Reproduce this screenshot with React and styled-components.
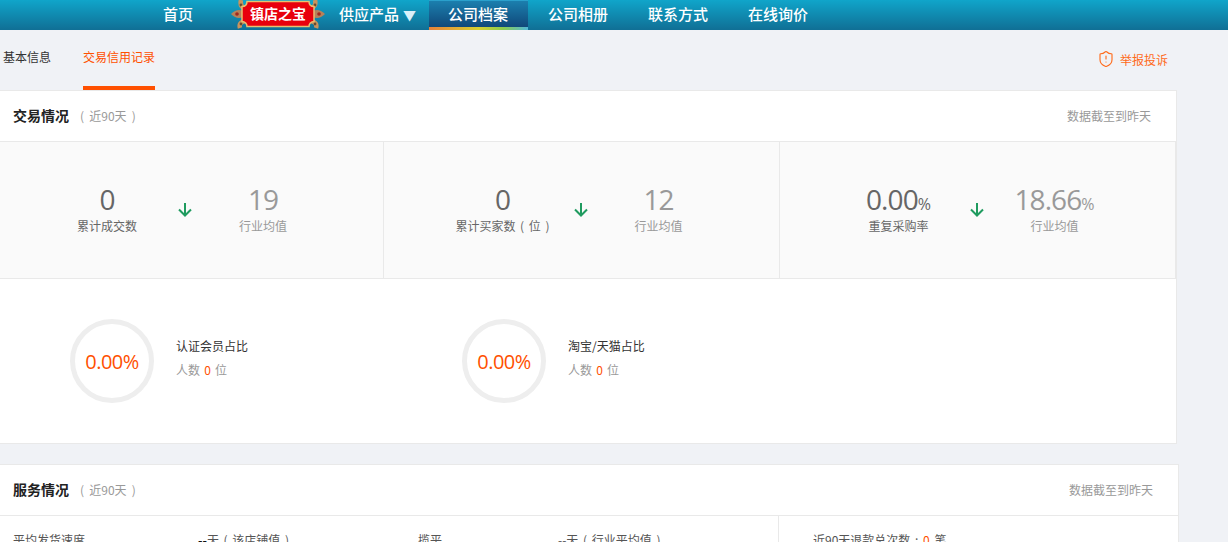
import styled, { createGlobalStyle } from 'styled-components';
import { ShieldAlert } from 'lucide-react';

const FONT = '"Noto Sans CJK SC", "Open Sans", sans-serif';

const GlobalStyle = createGlobalStyle`
  html, body {
    margin: 0;
    height: 542px;
    overflow: hidden;
    background: #f0f2f6;
    font-family: ${FONT};
    font-size: 12px;
    color: #333;
  }
  * { box-sizing: border-box; }
`;

const NavBar = styled.div`
  display: flex;
  align-items: stretch;
  height: 30px;
  padding-left: 143px;
  background: linear-gradient(#10a5ca, #106f95);
`;

const NavItem = styled.a`
  position: relative;
  display: block;
  width: ${(p) => p.$width || 100}px;
  padding: 0 ${(p) => p.$pad ?? 20}px;
  font-size: 15px;
  line-height: 27px;
  font-weight: 500;
  color: #fff;
  white-space: nowrap;
`;

const ActiveItem = styled(NavItem)`
  width: 99px;
  padding: 0 19px;
  background: linear-gradient(#1b7fae, #0f4274);
  border-top: 1px solid #2aa0cc;
  line-height: 25px;
  &::after {
    content: '';
    position: absolute;
    left: 0;
    right: 0;
    bottom: 0;
    height: 3px;
    background: linear-gradient(90deg, #e8803a, #d8d030 50%, #8ccc50 75%, #50b8d8);
  }
`;

const Caret = styled.span`
  font-size: 13px;
  margin-left: 4px;
  color: #d8f0fa;
`;

const LogoWrap = styled.div`
  width: 94px;
  height: 30px;
  margin: 0 14px 0 18px;
  flex: none;
  svg { display: block; }
`;

const Page = styled.div`
  margin-left: -13px;
`;

const TabBar = styled.div`
  display: flex;
  justify-content: space-between;
  height: 60px;
  padding: 0 8px 0 16px;
  width: 1189px;
`;

const Tabs = styled.div`
  display: flex;
  gap: 32px;
`;

const Tab = styled.a`
  height: 60px;
  padding-top: 18px;
  line-height: 18px;
  color: ${(p) => (p.$active ? '#ff5000' : '#333')};
  border-bottom: 4px solid ${(p) => (p.$active ? '#ff5000' : 'transparent')};
`;

const Report = styled.a`
  display: flex;
  align-items: center;
  gap: 5px;
  height: 58px;
  color: #ff6a1a;
`;

const Card = styled.section`
  width: ${(p) => p.$width}px;
  background: #fff;
  border: 1px solid #e9e9e9;
  border-left: 0;
  margin-bottom: 20px;
`;

const CardHead = styled.header`
  display: flex;
  justify-content: space-between;
  align-items: center;
  height: 51px;
  padding: 0 25px 2px 26px;
  border-bottom: 1px solid #e9e9e9;
`;

const Title = styled.h3`
  margin: 0;
  font-size: 14px;
  font-weight: 700;
  color: #222;
  display: flex;
  align-items: baseline;
`;

const Period = styled.span`
  margin-left: 11px;
  font-size: 12px;
  font-weight: 400;
  color: #999;
  word-spacing: 2.5px;
`;

const Note = styled.span`
  color: #999;
`;

const Stats = styled.div`
  display: grid;
  grid-template-columns: 397px 396px 396px;
  height: 137px;
  background: #fafafa;
  border-bottom: 1px solid #e9e9e9;
`;

const StatCell = styled.div`
  display: flex;
  justify-content: center;
  padding-top: 40px;
  border-right: 1px solid #e9e9e9;
  &:not(:first-child) { padding-right: 2px; }
`;

const StatBlock = styled.div`
  width: 142px;
  text-align: center;
`;

const Value = styled.div`
  height: 34px;
  font-family: "Open Sans", sans-serif;
  font-size: 28px;
  line-height: 34px;
  letter-spacing: -0.9px;
  color: ${(p) => (p.$muted ? '#999' : '#666')};
  small {
    font-size: 16px;
    line-height: 1;
    letter-spacing: 0;
  }
`;

const StatLabel = styled.div`
  margin-top: 1px;
  line-height: 18px;
  word-spacing: 2px;
  color: ${(p) => (p.$muted ? '#999' : '#666')};
`;

const ArrowBox = styled.div`
  width: 14px;
  padding-top: 21px;
  svg { display: block; }
`;

const Rings = styled.div`
  display: flex;
  height: 164px;
  padding: 40px 0 0 83px;
`;

const RingItem = styled.div`
  display: flex;
  width: 392px;
`;

const Ring = styled.div`
  display: flex;
  align-items: center;
  justify-content: center;
  width: 84px;
  height: 84px;
  border: 5px solid #eee;
  border-radius: 50%;
  font-family: "Open Sans", sans-serif;
  font-size: 20px;
  letter-spacing: -0.5px;
  color: #ff5000;
`;

const RingText = styled.div`
  margin-left: 22px;
  padding-top: 18px;
  line-height: 18px;
`;

const RingCount = styled.div`
  margin-top: 6px;
  color: #999;
  word-spacing: 1.5px;
  b { font-weight: 400; color: #ff5000; }
`;

const ServiceRow = styled.div`
  display: flex;
  height: 60px;
  padding-top: 15px;
  line-height: 18px;
  color: #555;
`;

const ServiceCell = styled.div`
  width: ${(p) => p.$width}px;
  flex: none;
  padding-left: ${(p) => p.$pad || 0}px;
  white-space: nowrap;
  word-spacing: 2px;
  b { color: #111; }
  em { font-style: normal; color: #ff5000; }
`;

const ServiceSide = styled(ServiceCell)`
  border-left: 1px solid #e9e9e9;
  margin-top: -15px;
  padding-top: 15px;
`;

const Arrow = () => (
  <svg width="14" height="14" viewBox="0 0 14 14" fill="none" stroke="#1f9b5f" strokeWidth="2">
    <path d="M7 0v12.5M1 6.5l6 6 6-6" />
  </svg>
);

const Logo = () => (
  <svg width="94" height="30" viewBox="0 0 94 30">
    <g fill="none" stroke="#c8945e" strokeWidth="4.5">
      <path d="M10 0c-1 4 0 7 4 8M84 0c1 4 0 7-4 8M9 28c-1-3 0-6 5-7M85 28c1-3 0-6-5-7" />
    </g>
    <g fill="#b5825a">
      <path d="M0 14c4-4 8-5 12-3v6c-4 2-8 1-12-3zM94 14c-4-4-8-5-12-3v6c4 2 8 1 12-3z" />
    </g>
    <circle cx="6" cy="14" r="1.8" fill="#a0281e" />
    <circle cx="88" cy="14" r="1.8" fill="#a0281e" />
    <circle cx="10" cy="5" r="1.4" fill="#6b4a2e" />
    <circle cx="84" cy="5" r="1.4" fill="#6b4a2e" />
    <circle cx="10" cy="24" r="1.4" fill="#6b4a2e" />
    <circle cx="84" cy="24" r="1.4" fill="#6b4a2e" />
    <path
      d="M16 1.5h62c0 3 2 5 5 5v15c-3 0-5 2.500-5 5H16c0-2.500-2-5-5-5v-15c3 0 5-2 5-5z"
      fill="#e8000c"
      stroke="#e9bf70"
      strokeWidth="1.5"
    />
    <text x="47" y="19" textAnchor="middle" fontSize="14" fontWeight="700" fill="#fff" fontFamily={FONT}>
      镇店之宝
    </text>
  </svg>
);

const stats = [
  { value: '0', label: '累计成交数', avg: '19' },
  { value: '0', label: '累计买家数 ( 位 )', avg: '12' },
  { value: '0.00', label: '重复采购率', avg: '18.66', unit: '%' },
];

const rings = ['认证会员占比', '淘宝/天猫占比'];

export default function App() {
  return (
    <>
      <GlobalStyle />
      <NavBar>
        <NavItem $width={70}>首页</NavItem>
        <LogoWrap><Logo /></LogoWrap>
        <NavItem $width={90} $pad={0}>供应产品<Caret>▼</Caret></NavItem>
        <ActiveItem>公司档案</ActiveItem>
        <NavItem>公司相册</NavItem>
        <NavItem>联系方式</NavItem>
        <NavItem>在线询价</NavItem>
      </NavBar>
      <Page>
        <TabBar>
          <Tabs>
            <Tab>基本信息</Tab>
            <Tab $active>交易信用记录</Tab>
          </Tabs>
          <Report>
            <ShieldAlert size={18} strokeWidth={1.5} />
            举报投诉
          </Report>
        </TabBar>
        <Card $width={1190}>
          <CardHead>
            <Title>交易情况<Period>( 近90天 )</Period></Title>
            <Note>数据截至到昨天</Note>
          </CardHead>
          <Stats>
            {stats.map((s) => (
              <StatCell key={s.label}>
                <StatBlock>
                  <Value>{s.value}{s.unit && <small>{s.unit}</small>}</Value>
                  <StatLabel>{s.label}</StatLabel>
                </StatBlock>
                <ArrowBox><Arrow /></ArrowBox>
                <StatBlock>
                  <Value $muted>{s.avg}{s.unit && <small>{s.unit}</small>}</Value>
                  <StatLabel $muted>行业均值</StatLabel>
                </StatBlock>
              </StatCell>
            ))}
          </Stats>
          <Rings>
            {rings.map((r) => (
              <RingItem key={r}>
                <Ring>0.00%</Ring>
                <RingText>
                  {r}
                  <RingCount>人数 <b>0</b> 位</RingCount>
                </RingText>
              </RingItem>
            ))}
          </Rings>
        </Card>
        <Card $width={1192}>
          <CardHead>
            <Title>服务情况<Period>( 近90天 )</Period></Title>
            <Note>数据截至到昨天</Note>
          </CardHead>
          <ServiceRow>
            <ServiceCell $width={211} $pad={26}>平均发货速度</ServiceCell>
            <ServiceCell $width={220}><b>--</b>天 ( 该店铺值 )</ServiceCell>
            <ServiceCell $width={140}>揽平</ServiceCell>
            <ServiceCell $width={220}>--天 ( 行业平均值 )</ServiceCell>
            <ServiceSide $width={400} $pad={34}>近90天退款总次数 : <em>0</em> 笔</ServiceSide>
          </ServiceRow>
        </Card>
      </Page>
    </>
  );
}
